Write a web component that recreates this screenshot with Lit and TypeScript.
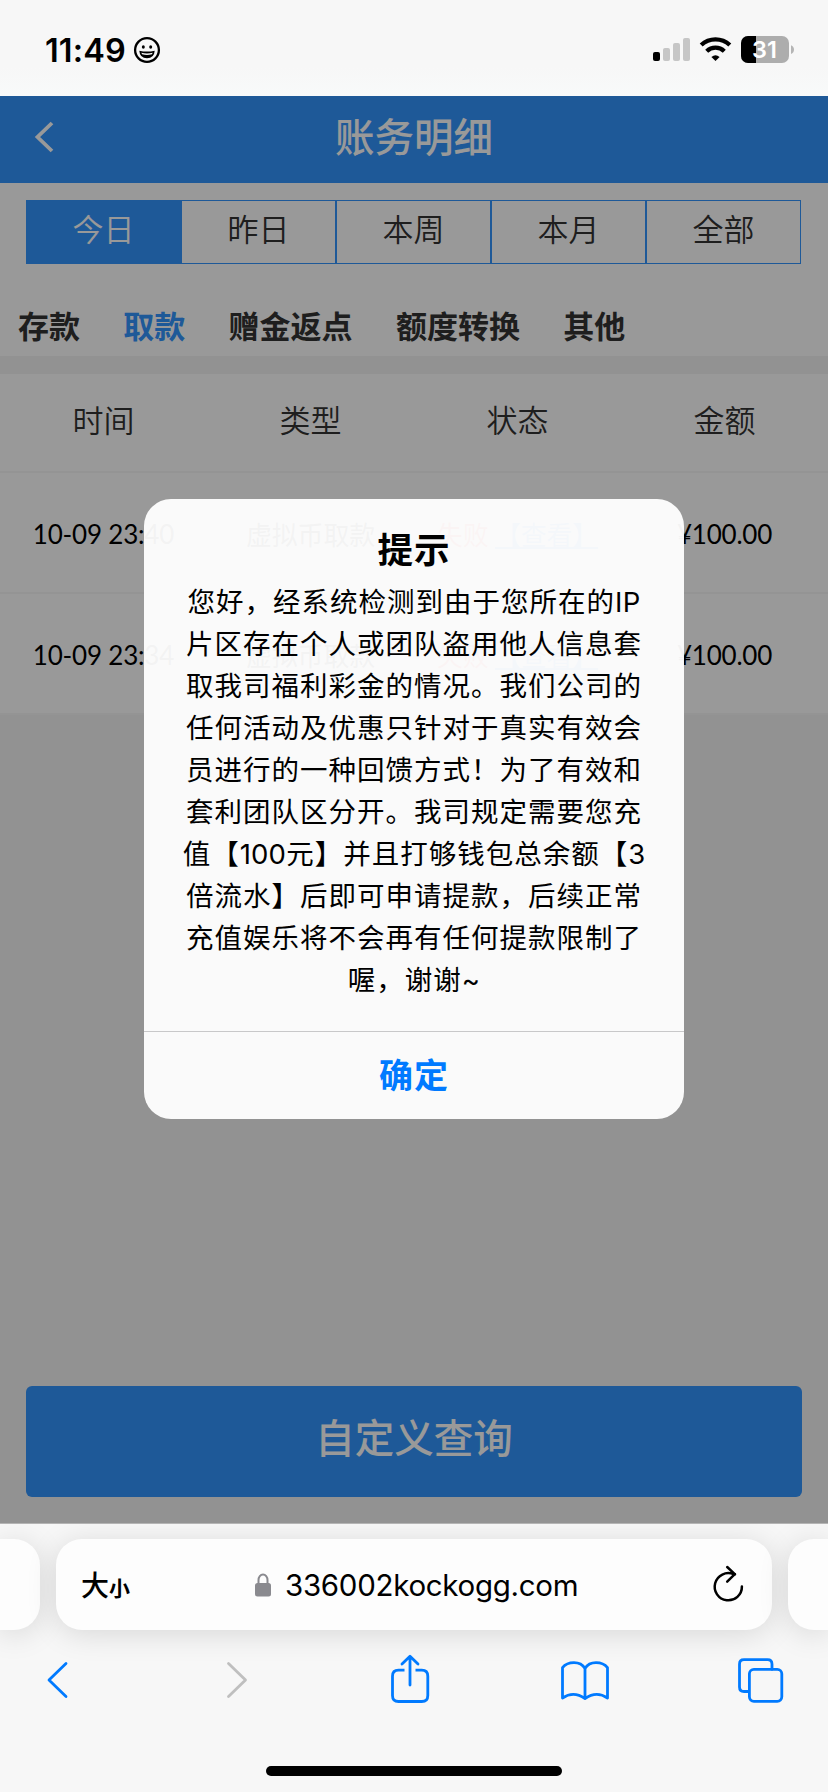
import { LitElement, html, css, svg } from "lit";
import { customElement } from "lit/decorators.js";
import { classMap } from "lit/directives/class-map.js";

const cjk = css`"Noto Sans CJK SC", sans-serif`;

@customElement("status-bar")
class StatusBar extends LitElement {
  static styles = css`
    :host { display: flex; align-items: center; justify-content: space-between; height: 96px; padding: 0 33px 0 45px; box-sizing: border-box; background: linear-gradient(#f7f7f7 70%, #f8fafa); }
    .left, .right { display: flex; align-items: center; }
    .time { font: 600 32.5px/40px Inter, sans-serif; letter-spacing: 0.1px; margin-top: 5px; width: 88px; white-space: nowrap; color: #000; }
    .face { margin-top: 4px; }
    svg { display: block; }
    .right { margin-top: 3px; }
    .num { font: 600 23.5px Inter, sans-serif; }
  `;
  render() {
    return html`
      <div class="left">
        <span class="time">11:49</span>
        <svg class="face" width="28" height="28" viewBox="0 0 28 28">
          <circle cx="14" cy="14" r="11.9" fill="none" stroke="#000" stroke-width="2.3" />
          <ellipse cx="10.3" cy="11" rx="1.5" ry="1.8" /><ellipse cx="17.7" cy="11" rx="1.5" ry="1.8" />
          <path d="M6.3 14.7Q14 16.5 21.7 14.7Q21.2 22.2 14 22.2Q6.8 22.2 6.3 14.7Z" />
          <path d="M8.3 16.7Q14 18.1 19.7 16.7L18.9 18.3Q14 19.7 9.1 18.3Z" fill="#f7f7f7" />
        </svg>
      </div>
      <div class="right">
        <svg width="142" height="28" viewBox="653 36 142 28">
          <rect x="653" y="52" width="7" height="9" rx="2" />
          <g fill="#c6c6c6">
            <rect x="663" y="48" width="7" height="13" rx="2" />
            <rect x="673" y="43" width="7" height="18" rx="2" />
            <rect x="683" y="38" width="7" height="23" rx="2" />
          </g>
          <g fill="none" stroke="#000" stroke-width="4.3">
            <path d="M701.2 45A20.8 20.8 0 0 1 729.8 45" />
            <path d="M706.7 51.2A12.8 12.8 0 0 1 724.3 51.2" />
          </g>
          <path d="M715.5 61L711.4 56.9A6.3 6.3 0 0 1 719.6 56.9Z" />
          <clipPath id="cell"><rect x="741" y="36" width="48" height="27" rx="7" /></clipPath>
          <g clip-path="url(#cell)">
            <rect x="741" y="36" width="48" height="27" fill="#adadad" />
            <rect x="741" y="36" width="15" height="27" />
          </g>
          <path d="M791 45.2Q794 46.5 794 49.6Q794 52.7 791 54Z" fill="#b5b5b5" />
          <text class="num" x="764.5" y="58.2" text-anchor="middle" fill="#fff">31</text>
        </svg>
      </div>
    `;
  }
}

@customElement("alert-dialog")
class AlertDialog extends LitElement {
  static styles = css`
    :host { display: flex; flex-direction: column; width: 540px; height: 620px; border-radius: 27px; background: rgba(255, 255, 255, 0.952); overflow: hidden; color: #000; text-align: center; font-family: Inter, ${cjk}; }
    .body { flex: 1; padding-top: 27px; }
    .title { font: 600 35.5px/50px Inter, ${cjk}; letter-spacing: 1px; }
    .text { font-size: 27.5px; line-height: 42px; letter-spacing: 1px; margin-top: 5px; white-space: nowrap; }
    .latin { letter-spacing: 0.2px; font-size: 27.5px; }
    .ok { height: 88px; box-sizing: border-box; padding-bottom: 4px; border-top: 1px solid #c8c8c9; display: flex; align-items: center; justify-content: center; color: #007aff; font-size: 34px; font-weight: 600; letter-spacing: 1px; }
  `;
  render() {
    const l = (t: string) => html`<span class="latin">${t}</span>`;
    return html`
      <div class="body">
        <div class="title">提示</div>
        <div class="text">
          <div>您好，经系统检测到由于您所在的${l("IP")}</div>
          <div>片区存在个人或团队盗用他人信息套</div>
          <div>取我司福利彩金的情况。我们公司的</div>
          <div>任何活动及优惠只针对于真实有效会</div>
          <div>员进行的一种回馈方式！为了有效和</div>
          <div>套利团队区分开。我司规定需要您充</div>
          <div>值【${l("100")}元】并且打够钱包总余额【${l("3")}</div>
          <div>倍流水】后即可申请提款，后续正常</div>
          <div>充值娱乐将不会再有任何提款限制了</div>
          <div>喔，谢谢${l("~")}</div>
        </div>
      </div>
      <div class="ok">确定</div>
    `;
  }
}

@customElement("browser-bar")
class BrowserBar extends LitElement {
  static styles = css`
    :host { display: flex; flex-direction: column; height: 269px; box-sizing: border-box; border-top: 1px solid #b4b4b4; background: #f7f7f7; overflow: hidden; }
    .cards { display: grid; grid-template-columns: 40px 716px 40px; column-gap: 16px; height: 91px; margin-top: 15px; }
    .card { background: #fdfdfd; border-radius: 26px; box-shadow: 0 4px 30px rgba(0, 0, 0, 0.13); }
    .prev { border-radius: 0 26px 26px 0; }
    .next { border-radius: 26px 0 0 26px; }
    .url { display: flex; align-items: center; box-sizing: border-box; padding: 0 27px 0 25px; color: #000; }
    .size { display: flex; align-items: baseline; font: 500 28px/40px ${cjk}; width: 173px; margin-top: 2px; }
    .small { font-size: 21px; font-weight: 700; }
    .domain { flex: 1; font: 400 29.5px/40px Inter, sans-serif; margin-left: 13px; letter-spacing: -0.3px; margin-top: 1px; white-space: nowrap; }
    svg { display: block; fill: none; stroke-linecap: round; stroke-linejoin: round; }
    .tools { display: grid; grid-template-columns: 180px 164px 170px 176px 50px; margin: 22px 0 0 46px; height: 52px; color: #007aff; }
    .off { color: #bfbfbf; }
    .home { width: 296px; height: 10px; border-radius: 5px; background: #000; margin: 62px auto 0; }
  `;
  icon(body: unknown, w: number, off = false) {
    return html`<svg class=${classMap({ off })} width=${w} height="52" viewBox="0 0 ${w} 52" stroke="currentColor" stroke-width="2.8">${body}</svg>`;
  }
  render() {
    return html`
      <div class="cards">
        <div class="card prev"></div>
        <div class="card url">
          <span class="size">大<span class="small">小</span></span>
          <svg width="18" height="24" viewBox="0 0 18 24">
            <path d="M4.5 11V7A4.5 5.6 0 0 1 13.5 7V11" stroke="#8a8a8f" stroke-width="2" />
            <rect x="1" y="10" width="16" height="13.5" rx="2.5" fill="#8a8a8f" />
          </svg>
          <span class="domain">336002kockogg.com</span>
          <svg width="34" height="40" viewBox="0 0 34 40" stroke="#000" stroke-width="2.5">
            <path d="M30.9 21.5A13.6 13.6 0 1 1 22.6 9.2L24 9.2" />
            <path d="M16.2 2L23.8 9.2L16.2 16.7" />
          </svg>
        </div>
        <div class="card next"></div>
      </div>
      <div class="tools">
        ${this.icon(svg`<path d="M20 11.5L3 28L20 44.5" />`, 24)}
        ${this.icon(svg`<path d="M2.5 11.5L19.5 28L2.5 44.5" />`, 24, true)}
        ${this.icon(svg`<path stroke-linecap="butt" d="M14.5 18.2H8.5Q2.5 18.2 2.5 24.2V43.5Q2.5 49.5 8.5 49.5H31.8Q37.8 49.5 37.8 43.5V24.2Q37.8 18.2 31.800 18.200H25.500" /><path d="M20 33V5M12 12L20 4.200L28 12" />`, 40)}
        ${this.icon(svg`<path d="M25 45.5V16.5Q21.5 10.7 14 10.7Q6.500 10.7 2.500 15.700V46Q13.500 38.500 25 46.500Q36.500 38.500 47.500 46V15.700Q43.500 10.7 36 10.7Q28.500 10.7 25 16.500" />`, 50)}
        ${this.icon(svg`<path d="M12.500 39.500H8Q3.500 39.500 3.500 35V12.200Q3.500 7.700 8 7.700H31.500Q36 7.700 36 12.200V17.300" /><rect x="13.400" y="17.300" width="32.400" height="32" rx="4.500" />`, 50)}
      </div>
      <div class="home"></div>
    `;
  }
}

@customElement("app-root")
class AppRoot extends LitElement {
  static styles = css`
    :host { display: flex; flex-direction: column; width: 828px; height: 1792px; overflow: hidden; font-family: ${cjk}; color: #333; }
    .page { position: relative; display: flex; flex-direction: column; height: 1427px; background: #f4f4f4; }
    .header { display: grid; grid-template-columns: 100px 1fr 100px; align-items: center; height: 87px; padding-bottom: 4px; box-sizing: border-box; background: #3294fd; color: #fff; font-size: 39.5px; line-height: 60px; text-align: center; }
    .back { display: block; margin: -1px 0 0 34px; }
    .title { margin-top: -6px; font-weight: 500; }
    .filters { background: #fff; padding: 17px 27px 0 26px; height: 173px; box-sizing: border-box; }
    .range { display: grid; grid-template-columns: repeat(5, 1fr); height: 64px; }
    .range span { border: 1px solid #3294fd; display: flex; align-items: center; justify-content: center; padding-bottom: 8px; font-size: 31px; line-height: 46px; font-weight: 350; }
    .range .on { background: #3294fd; color: #fff; }
    .kinds { display: flex; gap: 43.3px; margin: 38px 0 0 -8px; font-size: 31px; line-height: 46px; font-weight: 700; white-space: nowrap; }
    .kinds .on { color: #3294fd; }
    .row { display: grid; grid-template-columns: repeat(4, 1fr); align-items: center; text-align: center; background: #fff; height: 121px; box-sizing: border-box; border-bottom: 2px solid #f7f7f7; padding-top: 2px; white-space: nowrap; color: #000; font: 400 26px Lato, ${cjk}; letter-spacing: -0.2px; }
    .head { margin-top: 18px; height: 99px; color: #333; font: 350 31px ${cjk}; letter-spacing: 0; padding: 0 0 8px; }
    .row .fail { color: #f33; }
    .row .look { color: #3294fd; text-decoration: underline; }
    .query { margin: auto 26px 26px; height: 111px; border-radius: 6px; background: #3294fd; color: #fff; display: flex; align-items: center; justify-content: center; font-size: 39.500px; font-weight: 500; padding-bottom: 13px; box-sizing: border-box; }
    .mask { position: absolute; inset: 0; display: flex; align-items: center; justify-content: center; padding-bottom: 1px; background: rgba(0, 0, 0, 0.4); }
  `;
  render() {
    const on = (list: string[], active: number) =>
      list.map((t, i) => html`<span class=${classMap({ on: i === active })}>${t}</span>`);
    return html`
      <status-bar></status-bar>
      <div class="page">
        <div class="header">
          <svg class="back" width="20" height="32" viewBox="0 0 20 32" fill="none" stroke="#fff" stroke-width="3.8"><path d="M18 2L3.500 16L18 30" /></svg>
          <div class="title">账务明细</div>
        </div>
        <div class="filters">
          <div class="range">${on(["今日", "昨日", "本周", "本月", "全部"], 0)}</div>
          <div class="kinds">${on(["存款", "取款", "赠金返点", "额度转换", "其他"], 1)}</div>
        </div>
        <div class="row head"><span>时间</span><span>类型</span><span>状态</span><span>金额</span></div>
        ${["10-09 23:40", "10-09 23:34"].map(
          (t) => html`<div class="row">
            <span>${t}</span><span>虚拟币取款</span>
            <span><span class="fail">失败</span> <span class="look">【查看】</span></span>
            <span>¥100.00</span>
          </div>`
        )}
        <div class="query">自定义查询</div>
        <div class="mask"><alert-dialog></alert-dialog></div>
      </div>
      <browser-bar></browser-bar>
    `;
  }
}
